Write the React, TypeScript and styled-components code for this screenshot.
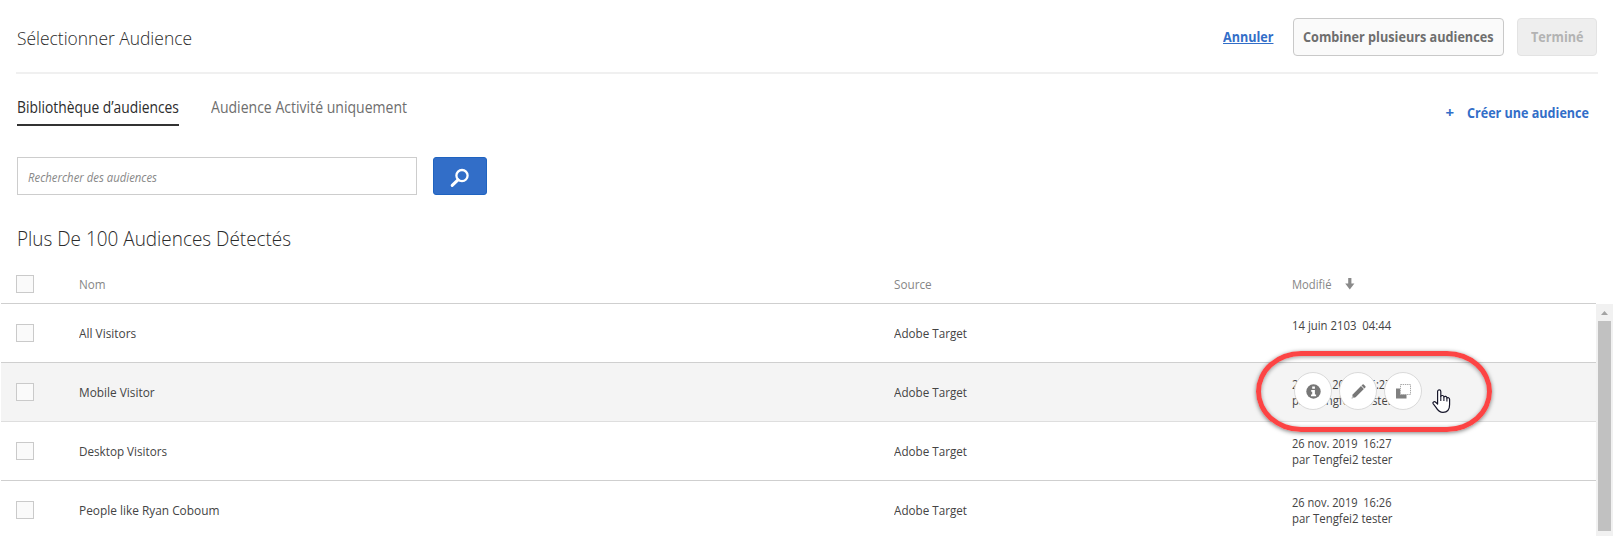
import React from 'react';
import styled, { createGlobalStyle, css } from 'styled-components';

const GlobalStyle = createGlobalStyle`
  *, *::before, *::after { box-sizing: border-box; }
  body {
    margin: 0;
    background: #fff;
    color: #444;
    font-family: "Open Sans", "Noto Sans", sans-serif;
    font-size: 13px;
    overflow: hidden;
  }
  button { font: inherit; }
`;

/* Slightly condensed text: $from is the natural width, $to the width it takes up. */
const Narrow = styled.span<{ $from: number; $to: number }>`
  display: inline-block;
  flex: none;
  margin-right: ${(p) => p.$to - p.$from}px;
  transform: scaleX(${(p) => p.$to / p.$from});
  transform-origin: left center;
  white-space: pre;
`;

const Page = styled.main`
  display: flex;
  flex-direction: column;
  width: 1614px;
  height: 536px;
  overflow: hidden;
`;

const Header = styled.header`
  display: flex;
  align-items: flex-start;
  justify-content: space-between;
  height: 74px;
  margin: 0 16px;
  padding: 18px 1px 0;
  border-bottom: 2px solid #f0f0f0;
`;

const Title = styled.h1`
  margin: 6px 0 0;
  font-size: 19px;
  font-weight: 300;
  line-height: 28px;
  color: #2a2a2a;
`;

const Actions = styled.div`
  display: flex;
  align-items: center;
  font-size: 15px;
  font-weight: 700;
`;

const CancelLink = styled.a`
  display: flex;
  margin: 0 20px 2px 0;
  color: #326ec8;

  span {
    text-decoration: underline;
    text-underline-offset: 1px;
    text-decoration-thickness: 1px;
  }
`;

const Button = styled.button<{ $width: number; $muted?: boolean }>`
  display: flex;
  align-items: center;
  justify-content: center;
  width: ${(p) => p.$width}px;
  height: 38px;
  padding: 0 0 2px;
  border: 1px solid ${(p) => (p.$muted ? '#e3e3e3' : '#c9c9c9')};
  border-radius: 4px;
  background: ${(p) => (p.$muted ? '#eeeeee' : '#fafafa')};
  color: ${(p) => (p.$muted ? '#b3b3b3' : '#6e6e6e')};

  & + & { margin-left: 13px; }
`;

const TabBar = styled.nav`
  display: flex;
  justify-content: space-between;
  height: 83px;
  padding: 20px 25px 0 17px;
`;

const Tabs = styled.div`
  display: flex;
  align-items: flex-start;
  gap: 32px;
`;

const Tab = styled.a<{ $active?: boolean }>`
  display: flex;
  height: 32px;
  font-size: 15.5px;
  line-height: 26px;
  color: #6e6e6e;
  ${(p) => p.$active && css`
    color: #2c2c2c;
    border-bottom: 2px solid #323232;
  `}
`;

const CreateLink = styled.a`
  display: flex;
  gap: 13px;
  margin-top: 5px;
  font-size: 15px;
  font-weight: 700;
  line-height: 26px;
  color: #326ec8;
`;

const SearchBar = styled.div`
  display: flex;
  gap: 16px;
  height: 38px;
  padding-left: 17px;
`;

const SearchField = styled.div`
  display: flex;
  align-items: center;
  width: 400px;
  padding: 1px 10px 0;
  border: 1px solid #cdcdcd;
  color: #888;
  font-style: italic;
`;

const SearchButton = styled.button`
  display: flex;
  align-items: center;
  justify-content: center;
  width: 54px;
  padding: 3px 0 0;
  border: 1px solid #1f63c0;
  border-radius: 3px;
  background: #326ec8;
`;

const ResultTitle = styled.h2`
  height: 43px;
  margin: 28px 0 0 17px;
  font-size: 21px;
  font-weight: 300;
  line-height: 30px;
  color: #2a2a2a;
`;

const rowGrid = css`
  display: grid;
  grid-template-columns: 63px 815px 398px 1fr;
  padding-left: 15px;
`;

const HeadRow = styled.div`
  ${rowGrid}
  flex: none;
  align-items: center;
  width: 1595px;
  height: 38px;
  margin-left: 1px;
  padding-bottom: 1px;
  border-bottom: 1px solid #cfcfcf;
  color: #868686;
`;

const SortLabel = styled.span`
  display: flex;
  align-items: center;
  gap: 14px;
`;

const TableBody = styled.div`
  display: flex;
  flex: 1;
  min-height: 0;
  padding-left: 1px;
`;

const Rows = styled.div`
  width: 1595px;
  height: 232px;
  overflow: hidden;
`;

const Row = styled.div<{ $hovered?: boolean }>`
  ${rowGrid}
  height: 59px;
  border-bottom: 1px solid ${(p) => (p.$hovered ? '#dedede' : '#cfcfcf')};
  background: ${(p) => (p.$hovered ? '#f4f4f4' : '#fff')};
`;

const Checkbox = styled.span`
  align-self: center;
  width: 18px;
  height: 18px;
  border: 1px solid #cacaca;
  background: #fafafa;
`;

const Cell = styled.span`
  display: flex;
  align-self: center;
  line-height: 18px;
`;

const DateCell = styled.div`
  position: relative;
  display: flex;
  flex-direction: column;
  align-items: flex-start;
  padding-top: 13px;
  line-height: 16px;
`;

const RowActions = styled.div`
  position: absolute;
  top: 9px;
  left: 2px;
  display: flex;
  gap: 7px;
`;

const RoundButton = styled.button`
  display: flex;
  align-items: center;
  justify-content: center;
  width: 38px;
  height: 38px;
  padding: 0;
  border: 1px solid #dadada;
  border-radius: 50%;
  background: #fff;
`;

const Highlight = styled.div`
  position: absolute;
  top: -12px;
  left: -36px;
  width: 236px;
  height: 81px;
  border: 5px solid #fc4444;
  border-radius: 45px / 40.5px;
  box-shadow: 0 1px 4px rgba(0, 0, 0, 0.5), inset 0 1px 4px rgba(0, 0, 0, 0.4);
  z-index: 2;
`;

const Pointer = styled.svg`
  position: absolute;
  top: 26px;
  left: 140px;
  z-index: 3;
`;

const Scrollbar = styled.div`
  display: flex;
  flex-direction: column;
  align-items: center;
  width: 17px;
  background: #f1f1f1;
`;

const ScrollArrow = styled.svg`
  flex: none;
`;

const ScrollThumb = styled.div`
  width: 13px;
  height: 210px;
  background: #c1c1c1;
`;

const SearchIcon = () => (
  <svg width="20" height="20" viewBox="0 0 20 20" fill="none" stroke="#fff">
    <circle cx="12" cy="7.6" r="5.6" strokeWidth="2.3" />
    <path d="M8 11.8L2.2 17.4" strokeWidth="3" strokeLinecap="round" />
  </svg>
);

const InfoIcon = () => (
  <svg width="15" height="15" viewBox="0 0 15 15">
    <circle cx="7.5" cy="7.5" r="7.2" fill="#777" />
    <path d="M6.2 2.6h2.7v2.2H6.2zM5.2 6h3.7v4.4h1.2v1.8H5v-1.8h1.2V7.7h-1z" fill="#fff" />
  </svg>
);

const PencilIcon = () => (
  <svg width="15" height="15" viewBox="0 0 15 15" fill="#777">
    <path d="M0.6 14.4L1.7 10.4L10 2.1L12.9 5L4.6 13.3z" />
    <path d="M10.5 1.6L11.6.6Q12.1.1 12.7.6L14.4 2.3Q14.9 2.9 14.4 3.4L13.4 4.5z" />
    <path d="M1.5 12.1L2.9 13.5L1.2 13.8z" fill="#fff" />
  </svg>
);

const CopyIcon = () => (
  <svg width="15" height="15" viewBox="0 0 15 15">
    <path d="M0 4.5H4V10.5H10.5V14.5H0z" fill="#808080" />
    <path d="M4.5 0.5H14.5V10.5H4.5z" fill="none" stroke="#a8a8a8" strokeDasharray="1.4 0.8" />
  </svg>
);

const SortArrow = () => (
  <svg width="10" height="12" viewBox="0 0 10 12">
    <path d="M3.2 0h3.2v5.5h3L4.8 11.5L.2 5.5h3z" fill="#8a8a8a" />
  </svg>
);

const HandPointer = () => (
  <Pointer width="19" height="25" viewBox="0 0 19 25">
    <path
      d="M5.6 2.6C5.6 .4 8.8 .4 8.8 2.6V7.3C9.6 6 11.8 6.3 11.9 7.9C12.8 6.8 14.8 7.3 14.9 8.9C15.9 8.2 17.6 8.8 17.6 10.6V15.6C17.6 20.6 15.2 23.4 11 23.4C7.4 23.4 5.6 21.2 4 18.4L1.1 14.6C.4 13.2 2.2 12 3.4 13L5.6 15z"
      fill="#fff"
      stroke="#17172b"
      strokeWidth="1.2"
      strokeLinejoin="round"
    />
    <path d="M8.8 7V12M11.9 8V12M14.9 9V12.4" stroke="#17172b" strokeWidth="1.1" fill="none" />
  </Pointer>
);

type Audience = {
  name: string;
  nameWidth: [number, number];
  date: string;
  dateWidth: [number, number];
  author?: string;
  hovered?: boolean;
};

const audiences: Audience[] = [
  { name: 'All Visitors', nameWidth: [63, 57.5], date: '14 juin 2103  04:44', dateWidth: [113.6, 99] },
  { name: 'Mobile Visitor', nameWidth: [83.4, 76], date: '26 nov. 2019  16:27', dateWidth: [117, 99.5], author: 'par Tengfei2 tester', hovered: true },
  { name: 'Desktop Visitors', nameWidth: [98, 88], date: '26 nov. 2019  16:27', dateWidth: [117, 99.5], author: 'par Tengfei2 tester' },
  { name: 'People like Ryan Coboum', nameWidth: [153.9, 140.5], date: '26 nov. 2019  16:26', dateWidth: [117, 99.5], author: 'par Tengfei2 tester' },
];

export default function App() {
  return (
    <>
      <GlobalStyle />
      <Page>
        <Header>
          <Title><Narrow $from={190.9} $to={175}>Sélectionner Audience</Narrow></Title>
          <Actions>
            <CancelLink><Narrow $from={60.2} $to={50.5}>Annuler</Narrow></CancelLink>
            <Button $width={211}><Narrow $from={225.7} $to={190.5}>Combiner plusieurs audiences</Narrow></Button>
            <Button $width={80} $muted><Narrow $from={62.4} $to={52.5}>Terminé</Narrow></Button>
          </Actions>
        </Header>
        <TabBar>
          <Tabs>
            <Tab $active><Narrow $from={181.4} $to={162}>Bibliothèque d’audiences</Narrow></Tab>
            <Tab><Narrow $from={216.3} $to={196}>Audience Activité uniquement</Narrow></Tab>
          </Tabs>
          <CreateLink>
            <span>+</span>
            <Narrow $from={145.6} $to={122}>Créer une audience</Narrow>
          </CreateLink>
        </TabBar>
        <SearchBar>
          <SearchField>
            <Narrow $from={147.8} $to={129}>Rechercher des audiences</Narrow>
          </SearchField>
          <SearchButton type="button" aria-label="Rechercher">
            <SearchIcon />
          </SearchButton>
        </SearchBar>
        <ResultTitle><Narrow $from={304} $to={274}>Plus De 100 Audiences Détectés</Narrow></ResultTitle>
        <HeadRow>
          <Checkbox />
          <Cell><Narrow $from={29.6} $to={26.5}>Nom</Narrow></Cell>
          <Cell><Narrow $from={41} $to={37}>Source</Narrow></Cell>
          <SortLabel>
            <Narrow $from={46.3} $to={40}>Modifié</Narrow>
            <SortArrow />
          </SortLabel>
        </HeadRow>
        <TableBody>
          <Rows>
            {audiences.map((a) => (
              <Row key={a.name} $hovered={a.hovered}>
                <Checkbox />
                <Cell><Narrow $from={a.nameWidth[0]} $to={a.nameWidth[1]}>{a.name}</Narrow></Cell>
                <Cell><Narrow $from={81.3} $to={73}>Adobe Target</Narrow></Cell>
                <DateCell>
                  <Narrow $from={a.dateWidth[0]} $to={a.dateWidth[1]}>{a.date}</Narrow>
                  {a.author && <Narrow $from={114.5} $to={100.5}>{a.author}</Narrow>}
                  {a.hovered && (
                    <>
                      <RowActions>
                        <RoundButton aria-label="Infos"><InfoIcon /></RoundButton>
                        <RoundButton aria-label="Modifier"><PencilIcon /></RoundButton>
                        <RoundButton aria-label="Copier"><CopyIcon /></RoundButton>
                      </RowActions>
                      <Highlight />
                      <HandPointer />
                    </>
                  )}
                </DateCell>
              </Row>
            ))}
          </Rows>
          <Scrollbar>
            <ScrollArrow width="17" height="17" viewBox="0 0 17 17">
              <path d="M5 11L8.5 7L12 11z" fill="#a3a3a3" />
            </ScrollArrow>
            <ScrollThumb />
          </Scrollbar>
        </TableBody>
      </Page>
    </>
  );
}
